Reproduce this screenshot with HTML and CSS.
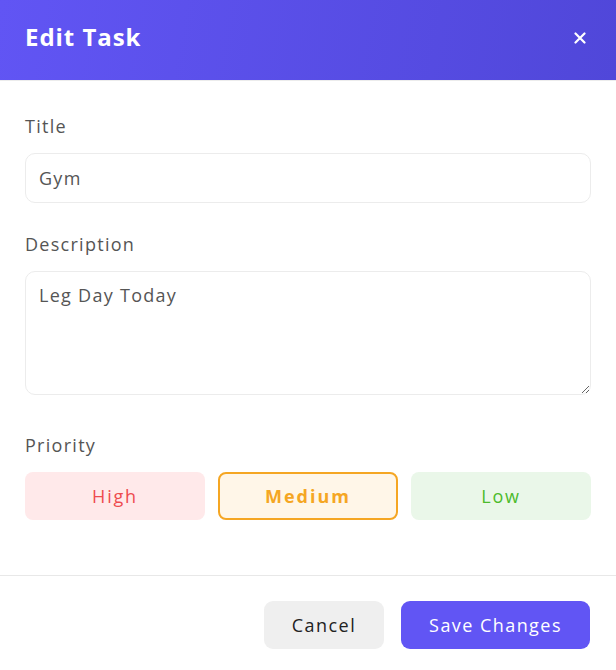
FILE: index.html
```html
<!DOCTYPE html>
<html lang="en">
<head>
<meta charset="utf-8">
<title>Edit Task</title>
<link rel="stylesheet" href="styles.css">
</head>
<body>
<div class="modal">
  <header class="modal-header">
    <h2 class="modal-title">Edit Task</h2>
    <button class="close-btn" aria-label="Close">
      <svg width="12" height="12" viewBox="0 0 12 12"><path d="M1.5 1.5 L10.5 10.5 M10.5 1.5 L1.5 10.5" stroke="#fff" stroke-width="2.2" stroke-linecap="round"/></svg>
    </button>
  </header>
  <div class="modal-body">
    <div class="form-group">
      <label class="form-label">Title</label>
      <input class="form-input" type="text" value="Gym">
    </div>
    <div class="form-group form-group-area">
      <label class="form-label">Description</label>
      <textarea class="form-textarea">Leg Day Today</textarea>
    </div>
    <div class="form-group">
      <label class="form-label">Priority</label>
      <div class="priority-options">
        <button class="priority priority-high">High</button>
        <button class="priority priority-medium is-active">Medium</button>
        <button class="priority priority-low">Low</button>
      </div>
    </div>
  </div>
  <footer class="modal-footer">
    <button class="btn btn-cancel">Cancel</button>
    <button class="btn btn-save">Save Changes</button>
  </footer>
</div>
</body>
</html>
```
FILE: styles.css
```css
* { box-sizing: border-box; }
html, body { margin: 0; padding: 0; background: #fff; }
body { font-family: "Open Sans", "Noto Sans", sans-serif; color: #555; letter-spacing: 0.08em; }

.modal { width: 616px; background: #fff; }

.modal-header {
  height: 81px;
  padding: 0 30px 4px 25px;
  display: flex;
  align-items: center;
  justify-content: space-between;
  background: linear-gradient(100deg, #6155f4 0%, #5047d9 100%);
  border-bottom: 1px solid #ececec;
}
.modal-title { margin: 0 0 3px; color: #fff; font-size: 24px; font-weight: 700; line-height: 1; letter-spacing: 0.04em; }
.close-btn {
  border: 0; background: none; padding: 0; width: 12px; height: 12px;
  display: flex; align-items: center; justify-content: center; cursor: pointer;
}

.modal-body { padding: 32px 25px 55px; }

.form-group { margin-bottom: 28px; }
.form-group:last-child { margin-bottom: 0; }
.form-group-area { margin-bottom: 37px; }

.form-label { display: block; font-size: 18px; line-height: 27px; color: #555; margin-bottom: 13px; }

.form-input, .form-textarea {
  display: block;
  width: 100%;
  border: 1px solid #ececec;
  border-radius: 10px;
  font-family: inherit;
  font-size: 18px;
  letter-spacing: inherit;
  color: #555;
  background: #fff;
  outline: none;
}
.form-input { height: 50px; padding: 0 13px; }
.form-textarea { height: 124px; padding: 10px 13px; line-height: 27px; resize: vertical; }

.priority-options { display: grid; grid-template-columns: repeat(3, 1fr); gap: 13px; }
.priority {
  height: 48px; border: 2px solid transparent; border-radius: 8px;
  font-family: inherit; font-size: 18px; letter-spacing: 0.1em; cursor: pointer;
}
.priority-high { background: #ffe9ea; color: #ee4b4f; }
.priority-medium { background: #fff6e8; color: #f5a623; }
.priority-low { background: #eaf7e9; color: #4cbb2c; }
.priority.is-active { border-color: #f5a623; font-weight: 700; letter-spacing: 0.11em; }

.modal-footer {
  border-top: 1px solid #e8e8e8;
  padding: 25px 26px;
  display: flex;
  justify-content: flex-end;
  gap: 17px;
}
.btn { height: 48px; border: 0; border-radius: 9px; font-family: inherit; font-size: 18px; letter-spacing: 0.08em; cursor: pointer; }
.btn-cancel { width: 120px; background: #efefef; color: #222; }
.btn-save { width: 189px; background: #6155f4; color: #fff; }
```
